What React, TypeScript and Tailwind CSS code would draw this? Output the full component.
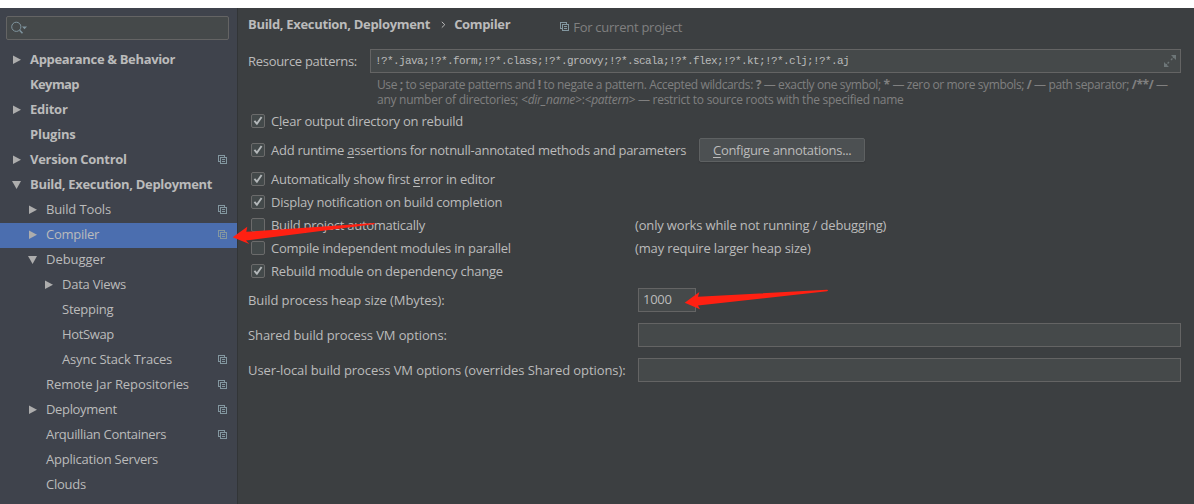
import type { ReactNode } from 'react';

type TreeItem = {
  label: string;
  level: 0 | 1 | 2;
  tracking: string;
  arrow?: 'right' | 'down';
  project?: boolean;
  selected?: boolean;
};

const TREE: TreeItem[] = [
  { label: 'Appearance & Behavior', level: 0, arrow: 'right', tracking: 'tracking-[-0.34px]' },
  { label: 'Keymap', level: 0, tracking: 'tracking-[-0.6px]' },
  { label: 'Editor', level: 0, arrow: 'right', tracking: 'tracking-[-0.25px]' },
  { label: 'Plugins', level: 0, tracking: 'tracking-[-0.2px]' },
  { label: 'Version Control', level: 0, arrow: 'right', project: true, tracking: 'tracking-[-0.27px]' },
  { label: 'Build, Execution, Deployment', level: 0, arrow: 'down', tracking: 'tracking-[-0.32px]' },
  { label: 'Build Tools', level: 1, arrow: 'right', project: true, tracking: 'tracking-[-0.14px]' },
  { label: 'Compiler', level: 1, arrow: 'right', project: true, selected: true, tracking: 'tracking-[-0.26px]' },
  { label: 'Debugger', level: 1, arrow: 'down', tracking: 'tracking-[-0.05px]' },
  { label: 'Data Views', level: 2, arrow: 'right', tracking: 'tracking-[-0.25px]' },
  { label: 'Stepping', level: 2, tracking: 'tracking-[-0.25px]' },
  { label: 'HotSwap', level: 2, tracking: 'tracking-[-0.35px]' },
  { label: 'Async Stack Traces', level: 2, project: true, tracking: 'tracking-[-0.18px]' },
  { label: 'Remote Jar Repositories', level: 1, project: true, tracking: 'tracking-[-0.09px]' },
  { label: 'Deployment', level: 1, arrow: 'right', project: true, tracking: 'tracking-[-0.35px]' },
  { label: 'Arquillian Containers', level: 1, project: true, tracking: 'tracking-[-0.33px]' },
  { label: 'Application Servers', level: 1, tracking: 'tracking-[-0.22px]' },
  { label: 'Clouds', level: 1, tracking: 'tracking-[-0.25px]' },
];

const INDENT = ['pl-3', 'pl-7', 'pl-11'];

function ProjectIcon() {
  return (
    <svg width="10" height="10" viewBox="0 0 10 10" fill="none" stroke="#8397a0" shapeRendering="crispEdges" className="shrink-0">
      <path d="M2.5 6.5H0.5V0.5H6.5V2.5" />
      <path d="M2.5 2.5H8.5V8.5H2.5Z" />
      <path d="M4 4.5H7M4 6.5H7" />
    </svg>
  );
}

function TreeArrow({ dir }: { dir?: 'right' | 'down' }) {
  return (
    <svg width="10" height="10" viewBox="0 0 10 10" fill="#adadad" className="shrink-0">
      {dir === 'right' && <path d="M1 0.5V9L9 4.8Z" />}
      {dir === 'down' && <path d="M0 1H9L4.6 9Z" />}
    </svg>
  );
}

function TreeRow({ item }: { item: TreeItem }) {
  return (
    <div className={`flex h-[25px] items-center pr-[9px] pb-0.5 ${INDENT[item.level]} ${item.selected ? 'bg-[#4b6eaf]' : ''}`}>
      <TreeArrow dir={item.arrow} />
      <span className={`ml-2 flex-1 pb-px ${item.tracking} ${item.level === 0 ? 'font-bold' : ''}`}>{item.label}</span>
      {item.project && <ProjectIcon />}
    </div>
  );
}

function Check({ checked, children, tracking, className = '' }: { checked?: boolean; children: ReactNode; tracking: string; className?: string }) {
  return (
    <div className={`flex h-[23px] items-center ${className}`}>
      <span className="h-[14px] w-[14px] shrink-0 rounded-[2px] border border-[#6b6b6b] bg-[#43494a]">
        {checked && (
          <svg width="12" height="12" viewBox="0 0 12 12" fill="none" stroke="#b4b8ba" strokeWidth="1.9">
            <path d="M2.4 5.9L4.9 8.7L9.6 2" />
          </svg>
        )}
      </span>
      <span className={`ml-1.5 ${tracking}`}>{children}</span>
    </div>
  );
}

function Key({ children }: { children: ReactNode }) {
  return <span className="underline decoration-1 underline-offset-2">{children}</span>;
}

const FIELD = 'h-6 border border-[#646464] bg-[#45494a]';

export default function App() {
  return (
    <div className="relative h-[504px] w-[1194px] overflow-hidden bg-white pt-2 font-['Open_Sans',sans-serif] text-[13px] leading-[18px] whitespace-nowrap text-[#bbbbbb]">
      <div className="flex h-[496px]">
        <aside className="w-[238px] shrink-0 border-r border-[#323537] bg-[#3f434c] pt-2">
          <div className="mr-2 ml-1.5 flex h-6 items-center rounded-[2px] border border-[#646464] bg-[#45494a] pl-1">
            <svg width="18" height="14" viewBox="0 0 18 14" fill="none" stroke="#7f949e">
              <circle cx="5.3" cy="5.8" r="4.6" />
              <path d="M8.6 9.2L11.5 12.3" strokeWidth="1.5" />
              <path d="M11 5.5H16L13.5 8.2Z" fill="#7f949e" stroke="none" />
            </svg>
          </div>
          <nav className="mt-2">
            {TREE.map((item) => (
              <TreeRow key={item.label} item={item} />
            ))}
          </nav>
        </aside>

        <main className="flex-1 bg-[#3c3f41] pr-[13px] pl-[10px]">
          <header className="flex h-[41px] items-start pt-[7px]">
            <span className="font-bold tracking-[-0.32px]">Build, Execution, Deployment</span>
            <svg width="5" height="8" viewBox="0 0 5 8" fill="none" stroke="#bbbbbb" className="mt-[6px] ml-[11px]">
              <path d="M0.8 0.8L3.8 3.7L0.8 6.6" />
            </svg>
            <span className="ml-2 font-bold tracking-[-0.35px]">Compiler</span>
            <span className="mt-[3px] ml-[50px] flex items-center gap-[3px] tracking-[-0.26px] text-[#808080]">
              <ProjectIcon />
              For current project
            </span>
          </header>

          <div className="flex items-center">
            <span className="w-[122px] tracking-[-0.29px]">Resource patterns:</span>
            <div className={`flex flex-1 items-center justify-between pr-1 pl-1 ${FIELD}`}>
              <span className="pb-px font-['Liberation_Mono',monospace] text-[11px] tracking-[-0.6px]">
                !?*.java;!?*.form;!?*.class;!?*.groovy;!?*.scala;!?*.flex;!?*.kt;!?*.clj;!?*.aj
              </span>
              <svg width="12" height="12" viewBox="0 0 12 12" fill="#6d7678" stroke="#6d7678">
                <path d="M7 0H12V5Z M0 7V12H5Z" stroke="none" />
                <path d="M7 5L10 2M5 7L2 10" strokeWidth="1.4" strokeDasharray="2 1" />
              </svg>
            </div>
          </div>

          <div className="mt-1 ml-[129px] text-[12px] leading-[15px] text-[#808080]">
            <div className="tracking-[-0.38px]">
              Use <b>;</b> to separate patterns and <b>!</b> to negate a pattern. Accepted wildcards: <b>?</b> — exactly one symbol; <b>*</b> — zero or more symbols; <b>/</b> — path separator; <b>/**/</b> —
            </div>
            <div className="tracking-[-0.27px]">
              any number of directories; <i>&lt;dir_name&gt;</i>:<i>&lt;pattern&gt;</i> — restrict to source roots with the specified name
            </div>
          </div>

          <section className="pl-[3px]">
            <Check checked tracking="tracking-[-0.21px]" className="mt-0.5">
              C<Key>l</Key>ear output directory on rebuild
            </Check>
            <div className="mt-1.5 flex h-6 items-center">
              <Check checked tracking="tracking-[-0.27px]">
                Add runtime <Key>a</Key>ssertions for notnull-annotated methods and parameters
              </Check>
              <button className="ml-[13px] flex h-6 w-[166px] items-center justify-center rounded-[2px] border border-[#5e6162] bg-[#4c5052] tracking-[-0.3px] shadow-[0_1px_1px_#36393b]">
                <span>
                  <Key>C</Key>onfigure annotations...
                </span>
              </button>
            </div>
            <Check checked tracking="tracking-[-0.25px]" className="mt-[5px]">
              Automatically show first <Key>e</Key>rror in editor
            </Check>
            <Check checked tracking="tracking-[-0.23px]">Display notification on build completion</Check>
            <div className="flex items-center">
              <Check tracking="tracking-[-0.28px]" className="w-[384px]">Build project automatically</Check>
              <span className="tracking-[-0.16px]">(only works while not running / debugging)</span>
            </div>
            <div className="flex items-center">
              <Check tracking="tracking-[-0.25px]" className="w-[384px]">Compile independent modules in parallel</Check>
              <span className="tracking-[-0.15px]">(may require larger heap size)</span>
            </div>
            <Check checked tracking="tracking-[-0.22px]">Rebuild module on dependency change</Check>
          </section>

          <section className="mt-1.5 flex flex-col gap-[11px]">
            <div className="flex items-center">
              <span className="w-[390px] pb-px tracking-[-0.11px]">Build process heap size (Mbytes):</span>
              <div className={`w-[58px] pl-1 leading-[21px] tracking-[-0.3px] ${FIELD}`}>1000</div>
            </div>
            <div className="flex items-center">
              <span className="w-[390px] pb-px tracking-[-0.11px]">Shared build process VM options:</span>
              <div className={`flex-1 ${FIELD}`} />
            </div>
            <div className="flex items-center">
              <span className="w-[390px] pb-px tracking-[-0.09px]">User-local build process VM options (overrides Shared options):</span>
              <div className={`flex-1 ${FIELD}`} />
            </div>
          </section>
        </main>
      </div>

      <svg width="1194" height="504" viewBox="0 0 1194 504" fill="#ff2012" className="pointer-events-none absolute inset-0">
        <path d="M232.7 237.3L247.3 226.7L246.3 231.8L374 223Q376 223.5 374 224.2L246 240.4L249.3 244Z" />
        <path d="M684.7 302.7L699.4 292L698 296.8L827 289.8Q829 290.4 827 291.2L698 305.6L700 309.2Z" />
      </svg>
    </div>
  );
}
